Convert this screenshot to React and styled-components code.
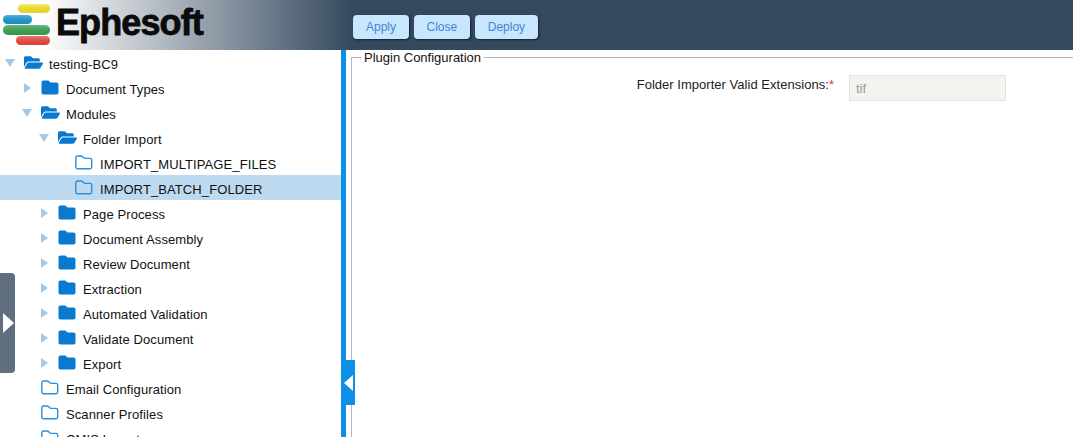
import React from "react";
import styled, { createGlobalStyle } from "styled-components";
import { FaFolderOpen } from "react-icons/fa";

const GlobalStyle = createGlobalStyle`
  html, body {
    margin: 0;
    padding: 0;
    height: 100%;
    overflow: hidden;
    background: #fff;
    font-family: "Liberation Sans", Arial, sans-serif;
  }
`;

const treeItems = [
  { level: 0, label: "testing-BC9", arrow: "down", icon: "open" },
  { level: 1, label: "Document Types", arrow: "right", icon: "closed" },
  { level: 1, label: "Modules", arrow: "down", icon: "open" },
  { level: 2, label: "Folder Import", arrow: "down", icon: "open" },
  { level: 3, label: "IMPORT_MULTIPAGE_FILES", icon: "empty" },
  { level: 3, label: "IMPORT_BATCH_FOLDER", icon: "empty", selected: true },
  { level: 2, label: "Page Process", arrow: "right", icon: "closed" },
  { level: 2, label: "Document Assembly", arrow: "right", icon: "closed" },
  { level: 2, label: "Review Document", arrow: "right", icon: "closed" },
  { level: 2, label: "Extraction", arrow: "right", icon: "closed" },
  { level: 2, label: "Automated Validation", arrow: "right", icon: "closed" },
  { level: 2, label: "Validate Document", arrow: "right", icon: "closed" },
  { level: 2, label: "Export", arrow: "right", icon: "closed" },
  { level: 1, label: "Email Configuration", icon: "empty" },
  { level: 1, label: "Scanner Profiles", icon: "empty" },
  { level: 1, label: "CMIS Import", icon: "empty" },
];

const FolderIcon = ({ type }) => {
  if (type === "open") return <FaFolderOpen size={19} color="#0a7ad1" />;
  if (type === "closed") {
    return (
      <svg width="18" height="15" viewBox="0 0 18 15">
        <path
          d="M2.5 0.5h4c1 0 1.5 .5 2 1l1 1h6c1.300 0 2 .8 2 2v8c0 1.300-.7 2-2 2h-13c-1.300 0-2-.7-2-2v-10c0-1.300 .7-2 2-2z"
          fill="#0a7ad1"
        />
      </svg>
    );
  }
  return (
    <svg width="18" height="15" viewBox="0 0 18 15">
      <path
        d="M2.500 1h3.500c.8 0 1.200 .3 1.700 .8l1 1c.4 .4 .7 .6 1.300 .6h5c1 0 1.700 .7 1.700 1.700v6.900c0 1-.7 1.700-1.700 1.700h-12.500c-1 0-1.700-.7-1.700-1.700v-9.300c0-1 .7-1.700 1.700-1.700z"
        fill="none"
        stroke="#2a8fdc"
        strokeWidth="1.400"
      />
    </svg>
  );
};

const App = () => {
  return (
    <Page>
      <GlobalStyle />
      <Header>
        <Logo>
          <LogoBars width="52" height="50" viewBox="0 0 52 50">
            <defs>
              <linearGradient id="barShade" x1="0" y1="0" x2="0" y2="1">
                <stop offset="0" stopColor="#fff" stopOpacity="0.25" />
                <stop offset="1" stopColor="#000" stopOpacity="0.08" />
              </linearGradient>
            </defs>
            <rect x="18" y="4" width="32" height="9" rx="4.500" fill="#fde92c" />
            <rect x="3" y="15" width="29" height="9" rx="4.500" fill="#1b9ad6" />
            <rect x="3" y="25" width="47" height="10" rx="5" fill="#3aa655" />
            <rect x="16" y="36" width="34" height="9" rx="4.500" fill="#f0483e" />
            <rect x="18" y="4" width="32" height="9" rx="4.500" fill="url(#barShade)" />
            <rect x="3" y="15" width="29" height="9" rx="4.500" fill="url(#barShade)" />
            <rect x="3" y="25" width="47" height="10" rx="5" fill="url(#barShade)" />
            <rect x="16" y="36" width="34" height="9" rx="4.500" fill="url(#barShade)" />
          </LogoBars>
          <LogoText>Ephesoft</LogoText>
        </Logo>
        <Toolbar>
          <ToolButton>Apply</ToolButton>
          <ToolButton>Close</ToolButton>
          <ToolButton>Deploy</ToolButton>
        </Toolbar>
      </Header>
      <Body>
        <Tree>
          {treeItems.map((item) => (
            <TreeRow key={item.label} $level={item.level} $selected={item.selected}>
              <ArrowCell>{item.arrow && <Arrow $dir={item.arrow} />}</ArrowCell>
              <IconCell>
                <FolderIcon type={item.icon} />
              </IconCell>
              <TreeLabel>{item.label}</TreeLabel>
            </TreeRow>
          ))}
        </Tree>
        <Splitter>
          <CollapseHandle>
            <HandleArrowLeft />
          </CollapseHandle>
        </Splitter>
        <Content>
          <PluginFieldset>
            <PluginLegend>Plugin Configuration</PluginLegend>
            <FormRow>
              <FieldLabel>
                Folder Importer Valid Extensions:<Required>*</Required>
              </FieldLabel>
              <FieldInput value="tif" disabled readOnly />
            </FormRow>
          </PluginFieldset>
        </Content>
      </Body>
      <ExpandHandle>
        <HandleArrowRight />
      </ExpandHandle>
    </Page>
  );
};

export default App;

const Page = styled.div`
  position: relative;
  width: 1073px;
  height: 437px;
  overflow: hidden;
  display: flex;
  flex-direction: column;
`;

const Header = styled.header`
  height: 50px;
  flex: none;
  display: flex;
  align-items: flex-start;
  background: linear-gradient(to right, #ffffff 0%, #ffffff 4%, #34495e 33%, #34495e 100%);
`;

const Logo = styled.div`
  width: 353px;
  height: 50px;
  flex: none;
  display: flex;
  align-items: flex-start;
`;

const LogoBars = styled.svg`
  flex: none;
`;

const LogoText = styled.span`
  margin-left: 4px;
  font-size: 36px;
  line-height: 46px;
  font-weight: 700;
  letter-spacing: -0.9px;
  color: #0b0b0b;
  -webkit-text-stroke: 0.8px #0b0b0b;
`;

const Toolbar = styled.div`
  display: flex;
  gap: 4.5px;
  padding-top: 15px;
`;

const ToolButton = styled.button`
  height: 24px;
  padding: 0 13px;
  border: none;
  border-radius: 4px;
  background: #c8e7ff;
  color: #3f86d2;
  font-family: "Liberation Sans", Arial, sans-serif;
  font-size: 12px;
  box-shadow: 1px 1px 2px #16222e;
`;

const Body = styled.div`
  flex: 1;
  min-height: 0;
  display: flex;
`;

const Tree = styled.div`
  width: 341px;
  flex: none;
  overflow: hidden;
`;

const TreeRow = styled.div`
  height: 25px;
  display: flex;
  align-items: center;
  padding-left: ${(p) => 5 + p.$level * 17}px;
  background: ${(p) => (p.$selected ? "#bedaf0" : "transparent")};
`;

const ArrowCell = styled.span`
  width: 19px;
  flex: none;
  display: flex;
  align-items: center;
`;

const Arrow = styled.span`
  display: block;
  width: 0;
  height: 0;
  ${(p) =>
    p.$dir === "down"
      ? `border-left: 5.5px solid transparent;
         border-right: 5.5px solid transparent;
         border-top: 8px solid #a0c9ea;`
      : `margin-left: 2px;
         border-top: 5.5px solid transparent;
         border-bottom: 5.5px solid transparent;
         border-left: 7px solid #a0c9ea;`}
`;

const IconCell = styled.span`
  width: 25px;
  flex: none;
  display: flex;
  align-items: center;
`;

const TreeLabel = styled.span`
  padding-top: 4px;
  font-size: 13px;
  letter-spacing: 0.1px;
  color: #111;
  white-space: nowrap;
`;

const Splitter = styled.div`
  position: relative;
  width: 5px;
  flex: none;
  background: #0d8fe9;
`;

const CollapseHandle = styled.div`
  position: absolute;
  left: 0;
  top: 310px;
  width: 14px;
  height: 45px;
  background: #0d8fe9;
  display: flex;
  align-items: center;
  justify-content: center;
  z-index: 2;
`;

const HandleArrowLeft = styled.span`
  width: 0;
  height: 0;
  border-top: 8px solid transparent;
  border-bottom: 8px solid transparent;
  border-right: 9px solid #fff;
`;

const ExpandHandle = styled.div`
  position: absolute;
  left: 0;
  top: 273px;
  width: 15px;
  height: 100px;
  background: #5f6f7f;
  border-radius: 0 4px 4px 0;
  display: flex;
  align-items: center;
  justify-content: center;
`;

const HandleArrowRight = styled.span`
  width: 0;
  height: 0;
  margin-left: 2px;
  border-top: 10px solid transparent;
  border-bottom: 10px solid transparent;
  border-left: 11px solid #fff;
`;

const Content = styled.main`
  flex: 1;
  min-width: 0;
  padding-left: 5px;
`;

const PluginFieldset = styled.fieldset`
  margin: 0 -4px 0 0;
  padding: 0;
  height: 420px;
  border: 1px solid #b5b5c2;
`;

const PluginLegend = styled.legend`
  margin-left: 9px;
  padding: 0 3px;
  font-size: 13px;
  color: #111;
`;

const FormRow = styled.div`
  display: flex;
  align-items: flex-start;
  margin-top: 10px;
`;

const FieldLabel = styled.label`
  width: 482px;
  flex: none;
  padding-top: 2px;
  text-align: right;
  font-size: 13px;
  letter-spacing: 0.03px;
  color: #222;
`;

const Required = styled.span`
  color: #e53935;
`;

const FieldInput = styled.input`
  box-sizing: border-box;
  width: 157px;
  height: 26px;
  margin-left: 15px;
  padding: 0 6px;
  border: 1px solid #e2e2e0;
  background: #f3f3ef;
  color: #999;
  font-family: "Liberation Sans", Arial, sans-serif;
  font-size: 13px;
`;
